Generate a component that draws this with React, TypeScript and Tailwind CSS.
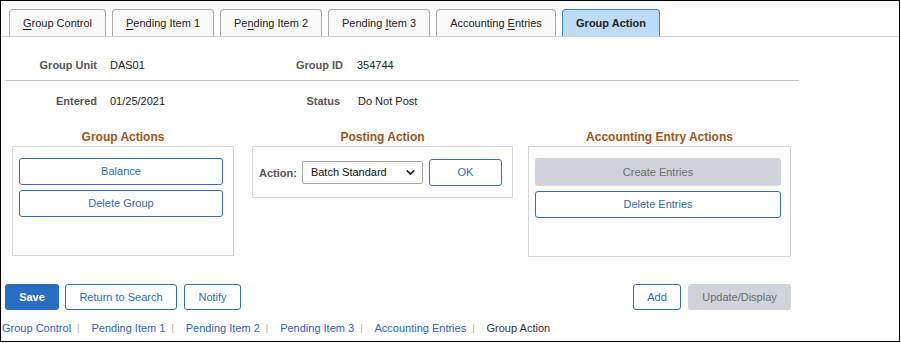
import { ChevronDown } from "lucide-react";

const tabs = [
  { pre: "", key: "G", post: "roup Control", w: "w-[97px]" },
  { pre: "", key: "P", post: "ending Item 1", w: "w-[102px]" },
  { pre: "Pe", key: "n", post: "ding Item 2", w: "w-[102px]" },
  { pre: "Pending ", key: "I", post: "tem 3", w: "w-[102px]" },
  { pre: "Accounting ", key: "E", post: "ntries", w: "w-[120px]" },
];

const footerLinks = ["Group Control", "Pending Item 1", "Pending Item 2", "Pending Item 3", "Accounting Entries"];

function OutlineButton({ label, className = "" }: { label: string; className?: string }) {
  return (
    <button
      className={`h-[27px] rounded-[3px] border border-[#2f6ec2] bg-white text-[11px] text-[#2f68c0] ${className}`}
    >
      {label}
    </button>
  );
}

function GroupBox({
  title,
  className,
  children,
}: {
  title: string;
  className: string;
  children: React.ReactNode;
}) {
  return (
    <div className="flex flex-col">
      <div className="h-[17px] text-center text-[12px] font-bold leading-[16px] text-[#9d5619]">{title}</div>
      <div className={`border border-[#d3d7dd] ${className}`}>{children}</div>
    </div>
  );
}

export default function App() {
  return (
    <div
      className="h-[342px] w-[900px] border border-black bg-white text-[11px] text-[#222]"
      style={{ fontFamily: '"Liberation Sans", Arial, sans-serif' }}
    >
      {/* tab strip */}
      <div className="flex h-[36px] items-end gap-[6px] border-b border-[#c9d1db] pl-[8px]">
        {tabs.map((t) => (
          <div
            key={t.post}
            className={`h-[27px] ${t.w} whitespace-pre rounded-t-[4px] border border-b-0 border-[#a9a9a9] bg-[#fafafa] text-center leading-[26px]`}
          >
            {t.pre}
            <span className="underline underline-offset-[2px]">{t.key}</span>
            {t.post}
          </div>
        ))}
        <div className="h-[27px] w-[98px] rounded-t-[4px] border border-b-0 border-[#3d82d6] bg-[#bcdcf8] text-center font-bold leading-[26px]">
          Group Action
        </div>
      </div>

      {/* header fields */}
      <div className="mt-[21px] flex h-[14px] items-center leading-[14px]">
        <span className="w-[96px] text-right font-bold text-[#555]">Group Unit</span>
        <span className="ml-[13px] w-[180px]">DAS01</span>
        <span className="w-[53px] text-right font-bold text-[#555]">Group ID</span>
        <span className="ml-[14px]">354744</span>
      </div>
      <div className="ml-[4px] mt-[8px] h-px w-[794px] bg-[#c4c4c4]" />
      <div className="mt-[13px] flex h-[14px] items-center leading-[14px]">
        <span className="w-[96px] text-right font-bold text-[#555]">Entered</span>
        <span className="ml-[13px] w-[180px]">01/25/2021</span>
        <span className="w-[50px] text-right font-bold text-[#555]">Status</span>
        <span className="ml-[18px]">Do Not Post</span>
      </div>

      {/* group boxes */}
      <div className="ml-[11px] mt-[21px] flex items-start">
        <GroupBox title="Group Actions" className="flex h-[110px] w-[222px] flex-col gap-[5px] pl-[6px] pt-[11px]">
          <OutlineButton label="Balance" className="w-[204px]" />
          <OutlineButton label="Delete Group" className="w-[204px]" />
        </GroupBox>
        <div className="ml-[18px]">
          <GroupBox title="Posting Action" className="flex h-[52px] w-[261px] items-center pl-[6px]">
            <span className="mt-[2px] font-bold text-[#555]">Action:</span>
            <div className="ml-[5px] flex h-[23px] w-[121px] items-center justify-between rounded-[2px] border border-[#a6a6a6] pl-[8px] pr-[5px] text-[11px] text-[#111]">
              <span>Batch Standard</span>
              <ChevronDown size={13} strokeWidth={3} className="text-[#222]" />
            </div>
            <OutlineButton label="OK" className="ml-[6px] w-[73px]" />
          </GroupBox>
        </div>
        <div className="ml-[15px]">
          <GroupBox
            title="Accounting Entry Actions"
            className="flex h-[111px] w-[263px] flex-col gap-[5px] pl-[6px] pt-[11px]"
          >
            <button className="h-[28px] w-[246px] rounded-[3px] bg-[#d0d4da] text-[11px] text-[#6b6b6b]">
              Create Entries
            </button>
            <OutlineButton label="Delete Entries" className="w-[246px]" />
          </GroupBox>
        </div>
      </div>

      {/* toolbar */}
      <div className="mt-[27px] flex h-[26px] items-stretch pl-[4px]">
        <button className="w-[54px] rounded-[3px] bg-[#2a6ec4] text-[11px] font-bold text-white">Save</button>
        <OutlineButton label="Return to Search" className="ml-[6px] !h-[26px] w-[112px]" />
        <OutlineButton label="Notify" className="ml-[7px] !h-[26px] w-[57px]" />
        <OutlineButton label="Add" className="ml-[392px] !h-[26px] w-[48px]" />
        <button className="ml-[7px] w-[103px] rounded-[3px] bg-[#d0d4da] text-[11px] text-[#6b6b6b]">
          Update/Display
        </button>
      </div>

      {/* footer links */}
      <div className="mt-[11px] flex items-center pl-[1px] leading-[14px]">
        {footerLinks.map((l) => (
          <span key={l} className="flex items-center">
            <span className="text-[#2b63be]">{l}</span>
            <span className="ml-[6px] mr-[12px] text-[9px] text-[#aaa]">|</span>
          </span>
        ))}
        <span className="text-[#333]">Group Action</span>
      </div>
    </div>
  );
}
